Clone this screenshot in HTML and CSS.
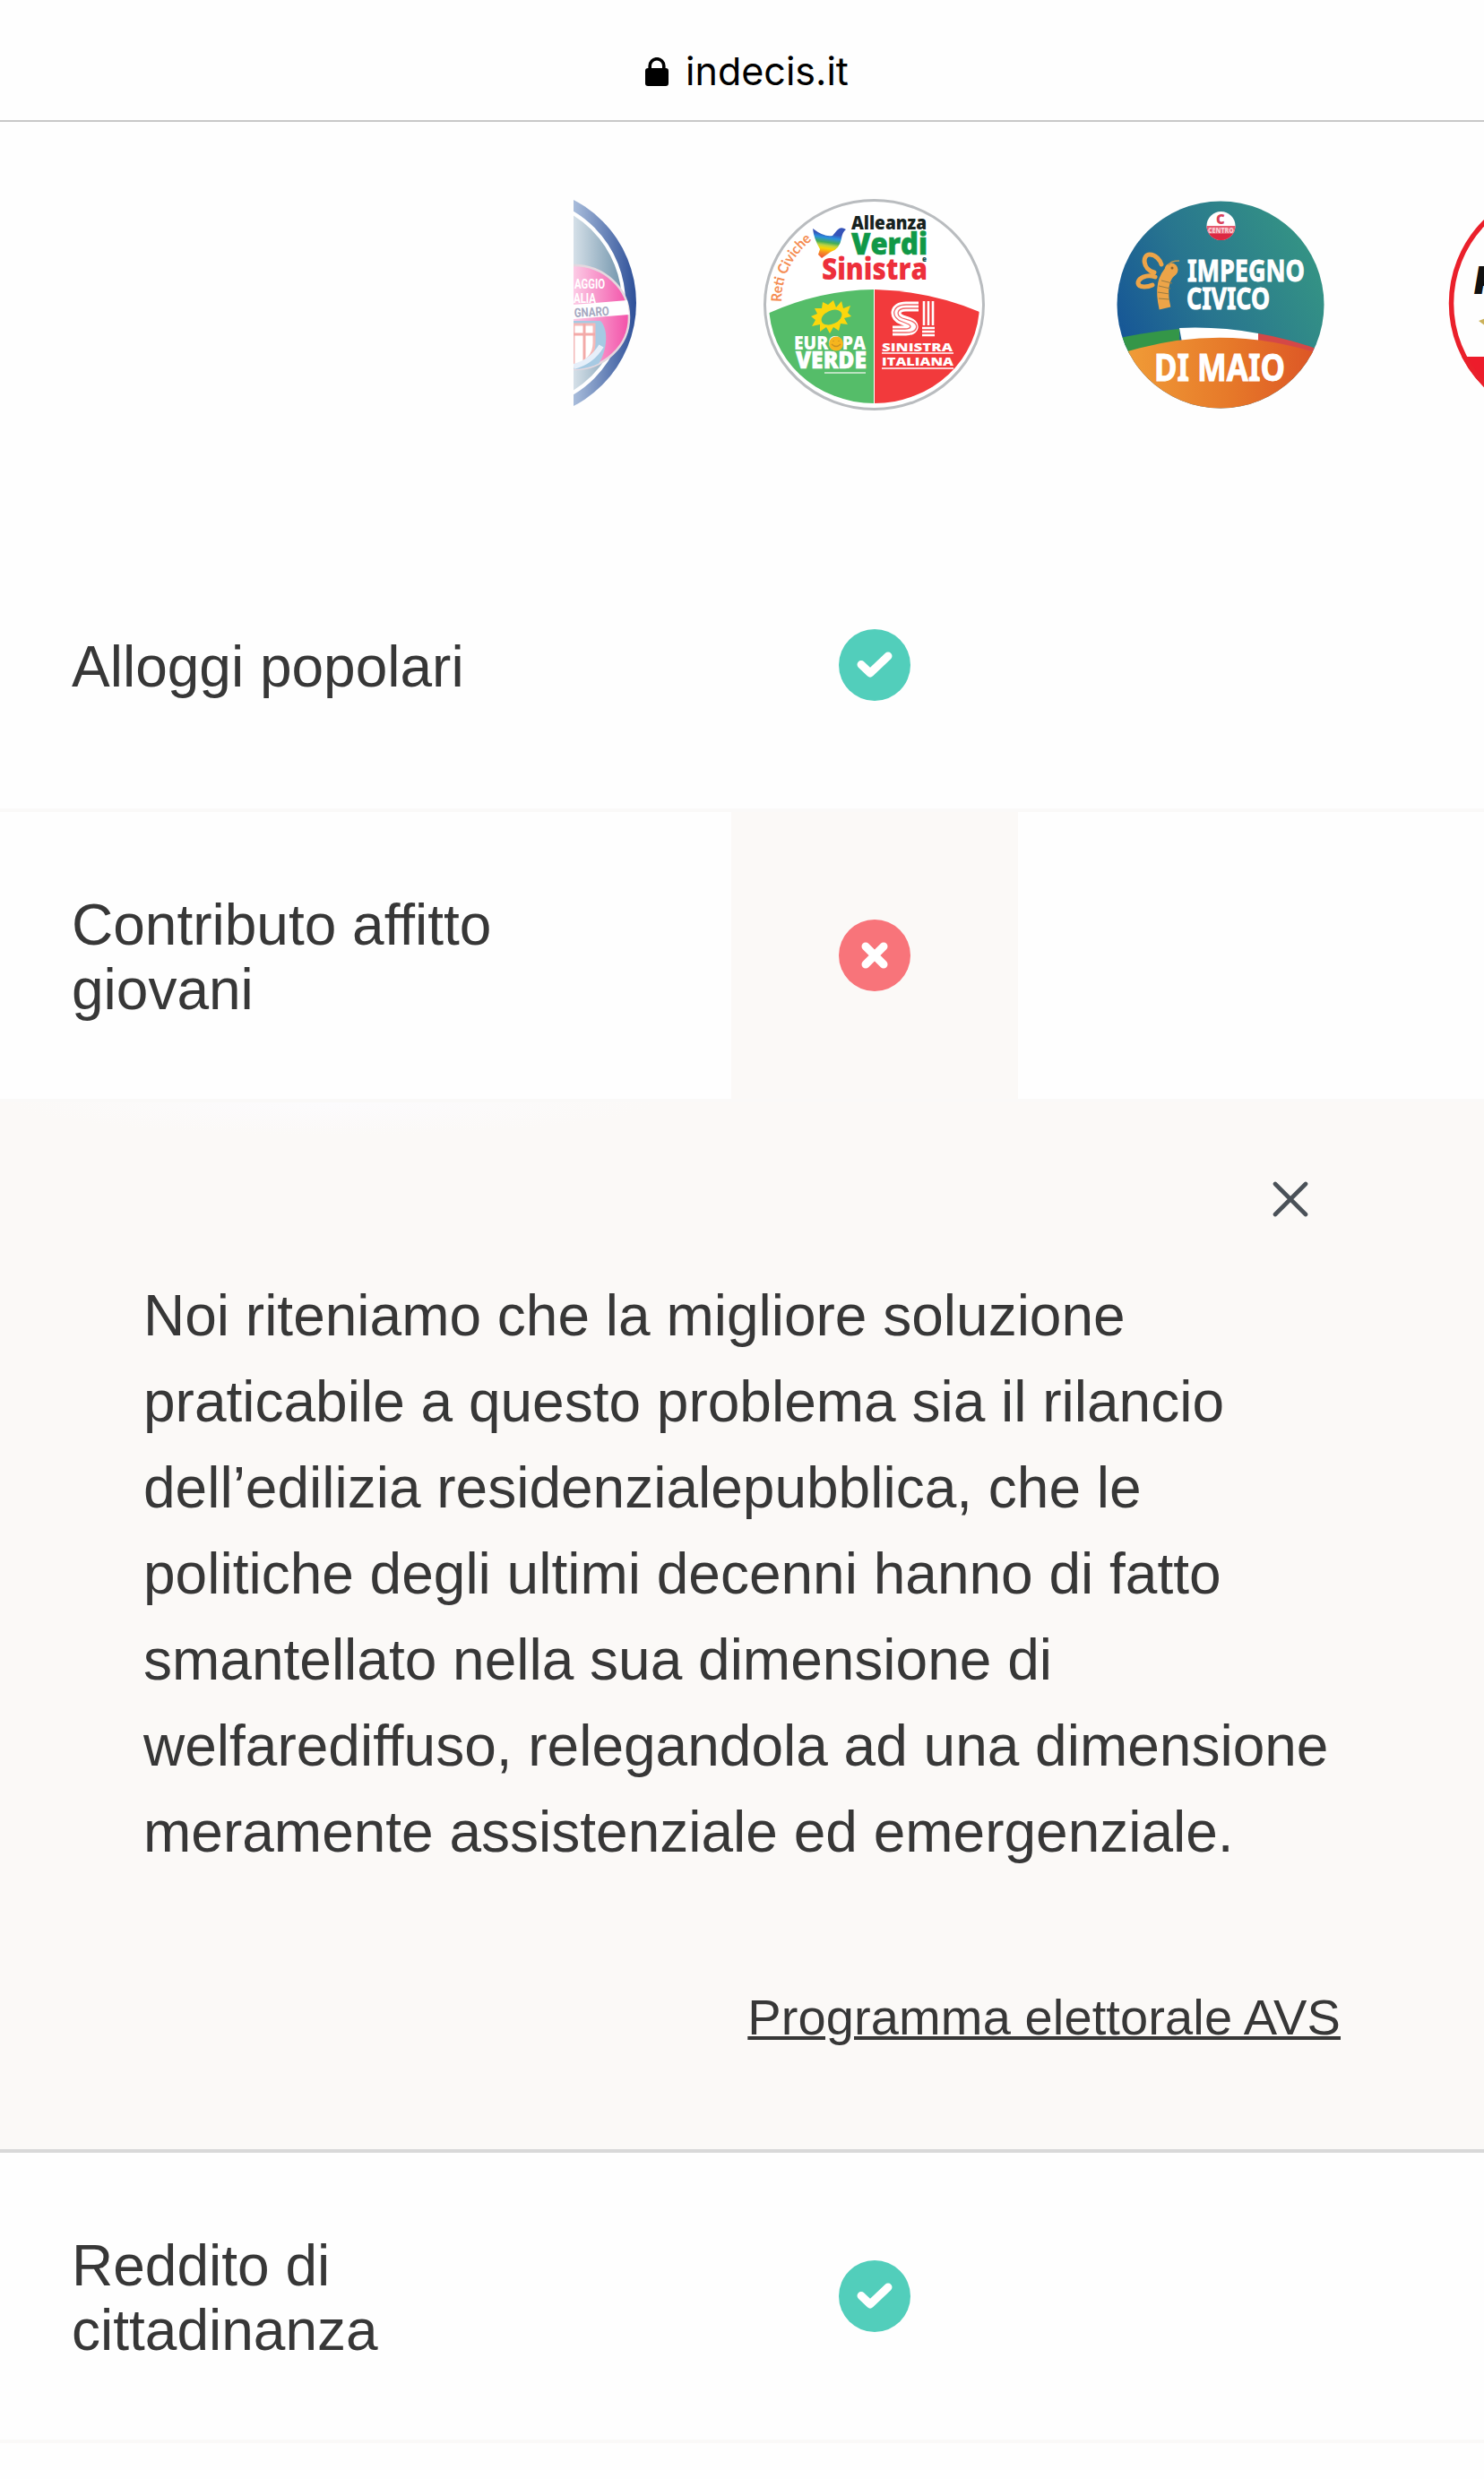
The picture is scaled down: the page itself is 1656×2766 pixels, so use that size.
FILE: index.html
```html
<!DOCTYPE html>
<html lang="it">
<head>
<meta charset="utf-8">
<title>indecis.it</title>
<link rel="stylesheet" href="styles.css">
</head>
<body>
<header class="address-bar">
  <svg class="lock" viewBox="0 0 26 32" aria-hidden="true">
    <path d="M5.2 14V9.5a7.8 7.8 0 0 1 15.6 0V14" fill="none" stroke="#000" stroke-width="3.6"/>
    <rect y="12" width="26" height="20" rx="3.2"/>
  </svg>
  <span class="domain">indecis.it</span>
</header>
<main class="table">
  <div class="parties">
    <div class="party-partial">
      <svg class="logo-left" viewBox="640 210 110 260" aria-label="Noi Moderati">
        <defs>
          <linearGradient id="steel" x1="640" x2="700" y1="0" y2="0" gradientUnits="userSpaceOnUse"><stop stop-color="#d5e0e8"/><stop offset="1" stop-color="#688da6"/></linearGradient>
          <linearGradient id="ring" x1="640" x2="710" y1="0" y2="0" gradientUnits="userSpaceOnUse"><stop stop-color="#a9bddb"/><stop offset="1" stop-color="#2d4f98"/></linearGradient>
          <linearGradient id="pink" x1="640" x2="700" y1="0" y2="0" gradientUnits="userSpaceOnUse"><stop stop-color="#fccbe5"/><stop offset="1" stop-color="#f354aa"/></linearGradient>
          <clipPath id="pinkClip"><ellipse cx="640" cy="354" rx="62" ry="58"/></clipPath>
        </defs>
        <circle cx="580.5" cy="338" r="129.5" fill="url(#ring)"/>
        <circle cx="579" cy="338" r="117" fill="url(#steel)" stroke="#fff" stroke-width="4"/>
        <ellipse cx="640" cy="354" rx="62" ry="58" fill="url(#pink)" stroke="#e4d8df" stroke-width="2.5"/>
        <g clip-path="url(#pinkClip)">
          <path d="M640 358h30c10 10 8 36-6 54h-24z" fill="#a6cae3"/>
          <path d="M640 362h23v21c0 12-8 22-23 26z" fill="#fff" stroke="#f4b9b8" stroke-width="3"/>
          <path d="M652 361v43M640 373h24" stroke="#f3aaa8" stroke-width="3"/>
          <path d="M640 409q20-5 31-23" fill="none" stroke="#e6effa" stroke-width="6"/>
        </g>
        <path d="M640 340l60-5 2 16-62 5z" fill="#fff"/>
        <g class="condensed">
          <text x="641" y="322" font-size="15" textLength="34" lengthAdjust="spacingAndGlyphs" fill="#fff">AGGIO</text>
          <text x="640" y="338" font-size="15" textLength="25" lengthAdjust="spacingAndGlyphs" fill="#fff">ALIA</text>
          <text x="641" y="354" font-size="14" textLength="39" lengthAdjust="spacingAndGlyphs" fill="#a3a8bf" transform="rotate(-3 641 354)">GNARO</text>
        </g>
      </svg>
    </div>
    <svg class="logo" viewBox="841 210 270 260" aria-label="Alleanza Verdi e Sinistra">
      <defs>
        <clipPath id="avs"><ellipse cx="975.5" cy="339.500" rx="117.500" ry="110.500"/></clipPath>
        <linearGradient id="dove" x1="0" x2="-.16" y1="0" y2="1"><stop offset=".12" stop-color="#3553b8"/><stop offset=".25" stop-color="#2a91df"/><stop offset=".4" stop-color="#43ad58"/><stop offset=".5" stop-color="#bcd344"/><stop offset=".6" stop-color="#fbd500"/><stop offset=".75" stop-color="#f58a25"/><stop offset="1" stop-color="#ee3740"/></linearGradient>
      </defs>
      <ellipse cx="975.500" cy="340" rx="122" ry="116.500" fill="#fff" stroke="#b9bcbf" stroke-width="3"/>
      <g clip-path="url(#avs)">
        <path d="M850 353Q910 324 975 323V460H850z" fill="#55bd69"/>
        <path d="M976 323Q1044 325 1102 352V460H976z" fill="#f23a3c"/>
      </g>
      <path d="M907 255q13 10 22 8l5-6q4-5 10-1-4 3-5 10-2 12-12 15l-10 7-4-4 2-6q-7-12-8-23z" fill="url(#dove)"/>
      <g class="heavy">
        <text x="950" y="255.500" font-size="21" textLength="84" lengthAdjust="spacingAndGlyphs" fill="#17221e">Alleanza</text>
        <text x="950" y="284" font-size="34" textLength="85" lengthAdjust="spacingAndGlyphs" fill="#109847" stroke="#109847" stroke-width=".6">Verdi</text>
        <text x="917" y="312" font-size="34" textLength="118" lengthAdjust="spacingAndGlyphs" fill="#ed2f3b">Sinistra</text>
        <text x="1029" y="292" font-size="8" fill="#174f52">e</text>
      </g>
      <path id="reti" d="M872 337Q872 295 908 266" fill="none"/>
      <text class="round" font-size="16" fill="#f58c52"><textPath href="#reti" textLength="80" lengthAdjust="spacingAndGlyphs">Reti Civiche</textPath></text>
      <path d="M930 335l3 8 6-7 2 8 8-3-3 8 4 4-8 2 4 7-8-1-2 8-6-4-4 7-4-7-7 5v-8l-9 2 4-7-5-4 7-3-3-6h8l1-7 6 3z" fill="#fbd70d"/>
      <ellipse cx="928" cy="354" rx="12" ry="7.500" fill="#55bd69" transform="rotate(-24 928 354)"/>
      <g class="heavy" fill="#fff">
        <text x="886" y="390" font-size="21" textLength="80" lengthAdjust="spacingAndGlyphs">EUROPA</text>
        <text x="888" y="411" font-size="26" textLength="79" lengthAdjust="spacingAndGlyphs" stroke="#fff" stroke-width=".6">VERDE</text>
        <text x="984" y="391.500" font-size="13" textLength="79" lengthAdjust="spacingAndGlyphs">SINISTRA</text>
        <text x="984" y="408" font-size="13" textLength="80" lengthAdjust="spacingAndGlyphs">ITALIANA</text>
      </g>
      <circle cx="933" cy="383.500" r="8" fill="#f6b51d"/>
      <path d="M928 384q5 5 10 0M930 380v1M936 380v1" fill="none" stroke="#c99022" stroke-width="1.300"/>
      <path d="M920 416h46" stroke="#b9e2bf" stroke-width="2"/>
      <path d="M984 394h80M984 411h80" stroke="#fff" stroke-width="1.500"/>
      <path d="M1025 342H1011c-14 0-14 12-4 15l6 2c9 3 8 10-2 10H996" fill="none" stroke="#fff" stroke-width="11"/>
      <path d="M1025 340H1011c-17 0-17 15-4 19l5 2c6 2 5 6-2 6H996M1025 344H1011c-11 0-11 8-4 11l7 2c13 4 11 14-3 14H996" fill="none" stroke="#f26567" stroke-width="1.300"/>
      <path d="M1031 336v27M1036 336v27M1041 336v27M1029 366h14M1029 370h14M1029 374h14" stroke="#fff" stroke-width="2.600"/>
    </svg>
    <svg class="logo" viewBox="1227 210 270 260" aria-label="Impegno Civico Di Maio">
      <defs>
        <clipPath id="ic"><circle cx="1362" cy="340" r="115.500"/></clipPath>
        <linearGradient id="sea" x1="0" x2="1" y1=".75" y2=".25"><stop stop-color="#124f98"/><stop offset=".45" stop-color="#28758f"/><stop offset="1" stop-color="#369783"/></linearGradient>
        <linearGradient id="orange" x1="0" x2="1"><stop stop-color="#f2a139"/><stop offset=".55" stop-color="#e67829"/><stop offset="1" stop-color="#db4f25"/></linearGradient>
        <clipPath id="center"><circle cx="1362.500" cy="252" r="16"/></clipPath>
      </defs>
      <g clip-path="url(#ic)">
        <path d="M1240 220H1485V470H1240z" fill="url(#sea)"/>
        <path d="M1240 379Q1280 370 1316 367V382L1240 402z" fill="#349648"/>
        <path d="M1316 366Q1360 364 1404 372V382H1319z" fill="#fff"/>
        <path d="M1404 372Q1440 378 1480 393V402L1404 384z" fill="#d44847"/>
        <path d="M1240 398Q1362 355 1485 399V470H1240z" fill="url(#orange)"/>
      </g>
      <circle cx="1362.500" cy="252" r="16" fill="#fff"/>
      <path d="M1346 252H1379V269H1346z" fill="#e65b70" clip-path="url(#center)"/>
      <path d="M1346 261H1379V269H1346z" fill="#dc2842" clip-path="url(#center)"/>
      <text x="1357" y="250" class="heavy" font-size="15" fill="#d9435a">C</text>
      <text x="1348" y="260" class="heavy" font-size="8" textLength="29" lengthAdjust="spacingAndGlyphs" fill="#f8cdd3">CENTRO</text>
      <g fill="none" stroke="#eda448" stroke-width="5" stroke-linecap="round">
        <path d="M1288 304c-13-3-14-20-5-20 7 0 12 7 13 11M1289 309c-10-4-19 2-19 7 1 6 12 4 16 2"/>
        <path d="M1307 302q-14 12-7 42" stroke-width="13" stroke-linecap="butt"/>
      </g>
      <circle cx="1307" cy="301" r="7.500" fill="#eda448"/><path d="M1304 296q2-5 12-5" fill="none" stroke="#b79555" stroke-width="1.500"/>
      <path d="M1296 313l12 3M1293 319l13 3M1292 326l13 2M1293 333l12 1" stroke="#987b42" stroke-width="1"/>
      <circle cx="1308" cy="299" r="1.500" fill="#8b632e"/>
      <g class="rounded-bold" fill="#fff" stroke="#fff" stroke-width=".9">
        <text x="1325" y="314" font-size="34" textLength="131" lengthAdjust="spacingAndGlyphs">IMPEGNO</text>
        <text x="1324" y="345" font-size="34" textLength="93" lengthAdjust="spacingAndGlyphs">CIVICO</text>
        <text x="1288" y="425" font-size="41" textLength="146" lengthAdjust="spacingAndGlyphs">DI MAIO</text>
      </g>
    </svg>
    <svg class="logo-right" viewBox="1588 210 68 260" aria-label="Partito Democratico">
      <defs><clipPath id="last"><circle cx="1748" cy="338.500" r="131"/></clipPath></defs>
      <path d="M1600 398H1700V470H1600z" fill="#ed1c2b" clip-path="url(#last)"/>
      <circle cx="1748" cy="338.500" r="128.500" fill="none" stroke="#ea202b" stroke-width="5.500"/>
      <text x="1645" y="328" font-size="43" class="slanted" fill="#111">P</text>
      <path d="M1650 358l8-3v9z" fill="#cbb15a"/>
    </svg>
  </div>

  <section class="row">
    <h2 class="label">Alloggi popolari</h2>
    <div class="answer"><svg class="badge yes" viewBox="0 0 80 80" aria-label="Sì"><circle cx="40" cy="40" r="40"/><path d="M25 39.500L35 49L55 30"/></svg></div>
  </section>
  <section class="row">
    <h2 class="label">Contributo affitto giovani</h2>
    <div class="answer selected"><svg class="badge no" viewBox="0 0 80 80" aria-label="No"><circle cx="40" cy="40" r="40"/><path d="M30 30L50 50M50 30L30 50"/></svg></div>
  </section>
  <article class="detail">
    <button class="close" aria-label="Chiudi"><svg viewBox="0 0 40 40"><path d="M3 3L37 37M37 3L3 37"/></svg></button>
    <p class="quote">Noi riteniamo che la migliore soluzione praticabile a questo problema sia il rilancio dell’edilizia residenzialepubblica, che le politiche degli ultimi decenni hanno di fatto smantellato nella sua dimensione di welfarediffuso, relegandola ad una dimensione meramente assistenziale ed emergenziale.</p>
    <a class="source" href="#">Programma elettorale AVS</a>
  </article>
  <section class="row">
    <h2 class="label">Reddito di cittadinanza</h2>
    <div class="answer"><svg class="badge yes" viewBox="0 0 80 80" aria-label="Sì"><circle cx="40" cy="40" r="40"/><path d="M25 39.500L35 49L55 30"/></svg></div>
  </section>
</main>
</body>
</html>
```
FILE: styles.css
```css
* { box-sizing: border-box; }

body {
  margin: 0;
  width: 1656px;
  height: 2766px;
  overflow: hidden;
  background: #fefefe;
  color: #373737;
  font-family: "Liberation Sans", Arial, sans-serif;
}

.address-bar {
  display: flex;
  justify-content: center;
  align-items: center;
  gap: 19px;
  height: 136px;
  padding: 24px 0 0 11px;
  border-bottom: 2px solid #c8c8c8;
  color: #000;
}
.lock { width: 26px; height: 32px; margin-top: 2px; }
.domain {
  font-family: Inter, sans-serif;
  font-size: 43px;
  line-height: 52px;
}

.parties {
  display: grid;
  grid-template-columns: 750px 320px 320px 68px;
  column-gap: 66px;
  height: 446px;
  padding-top: 74px;
}
.party-partial { display: flex; justify-content: flex-end; }
.logo-left { width: 110px; height: 260px; }
.logo { width: 270px; height: 260px; justify-self: center; }
.logo-right { width: 68px; height: 260px; }

.heavy { font-family: "Open Sans", sans-serif; font-weight: 800; }
.condensed { font-family: Roboto, sans-serif; font-weight: 700; }
.round { font-family: Lato, sans-serif; font-weight: 700; }
.rounded-bold { font-family: "Noto Sans", sans-serif; font-weight: 700; }
.slanted { font-family: Inter, sans-serif; font-weight: 900; font-style: italic; }

.row {
  display: grid;
  grid-template-columns: 816px 320px;
  height: 324px;
  border-bottom: 4px solid #faf9f8;
}
.label {
  align-self: center;
  width: 640px;
  margin: 0;
  padding: 4px 80px 0;
  font-size: 64px;
  font-weight: 400;
  line-height: 72px;
}
.answer { display: flex; align-items: center; justify-content: center; }
.selected { background: #fbf9f7; }
.badge { width: 80px; height: 80px; }
.badge path {
  fill: none;
  stroke: #fff;
  stroke-width: 9;
  stroke-linecap: round;
  stroke-linejoin: round;
}
.yes circle { fill: #52cebb; }
.no circle { fill: #f8747a; }

.detail {
  display: flex;
  flex-direction: column;
  height: 1172px;
  padding: 88px 160px 0;
  border-bottom: 4px solid #d8d8d8;
  background: radial-gradient(ellipse 360px 36px at 370px 0, #fcfbfd, #fbf9f7) #fbf9f7;
}
.close {
  align-self: flex-end;
  margin-right: 36px;
  width: 40px;
  height: 40px;
  padding: 0;
  border: 0;
  background: none;
}
.close svg { display: block; width: 40px; height: 40px; }
.close path { stroke: #4a5158; stroke-width: 4.6; stroke-linecap: round; }
.quote {
  margin: 62px 0 0;
  font-size: 64px;
  line-height: 96px;
}
.source {
  align-self: flex-end;
  margin-top: 117px;
  color: inherit;
  font-size: 56px;
  line-height: 84px;
  letter-spacing: .12px;
  text-decoration-thickness: 4px;
}
```
